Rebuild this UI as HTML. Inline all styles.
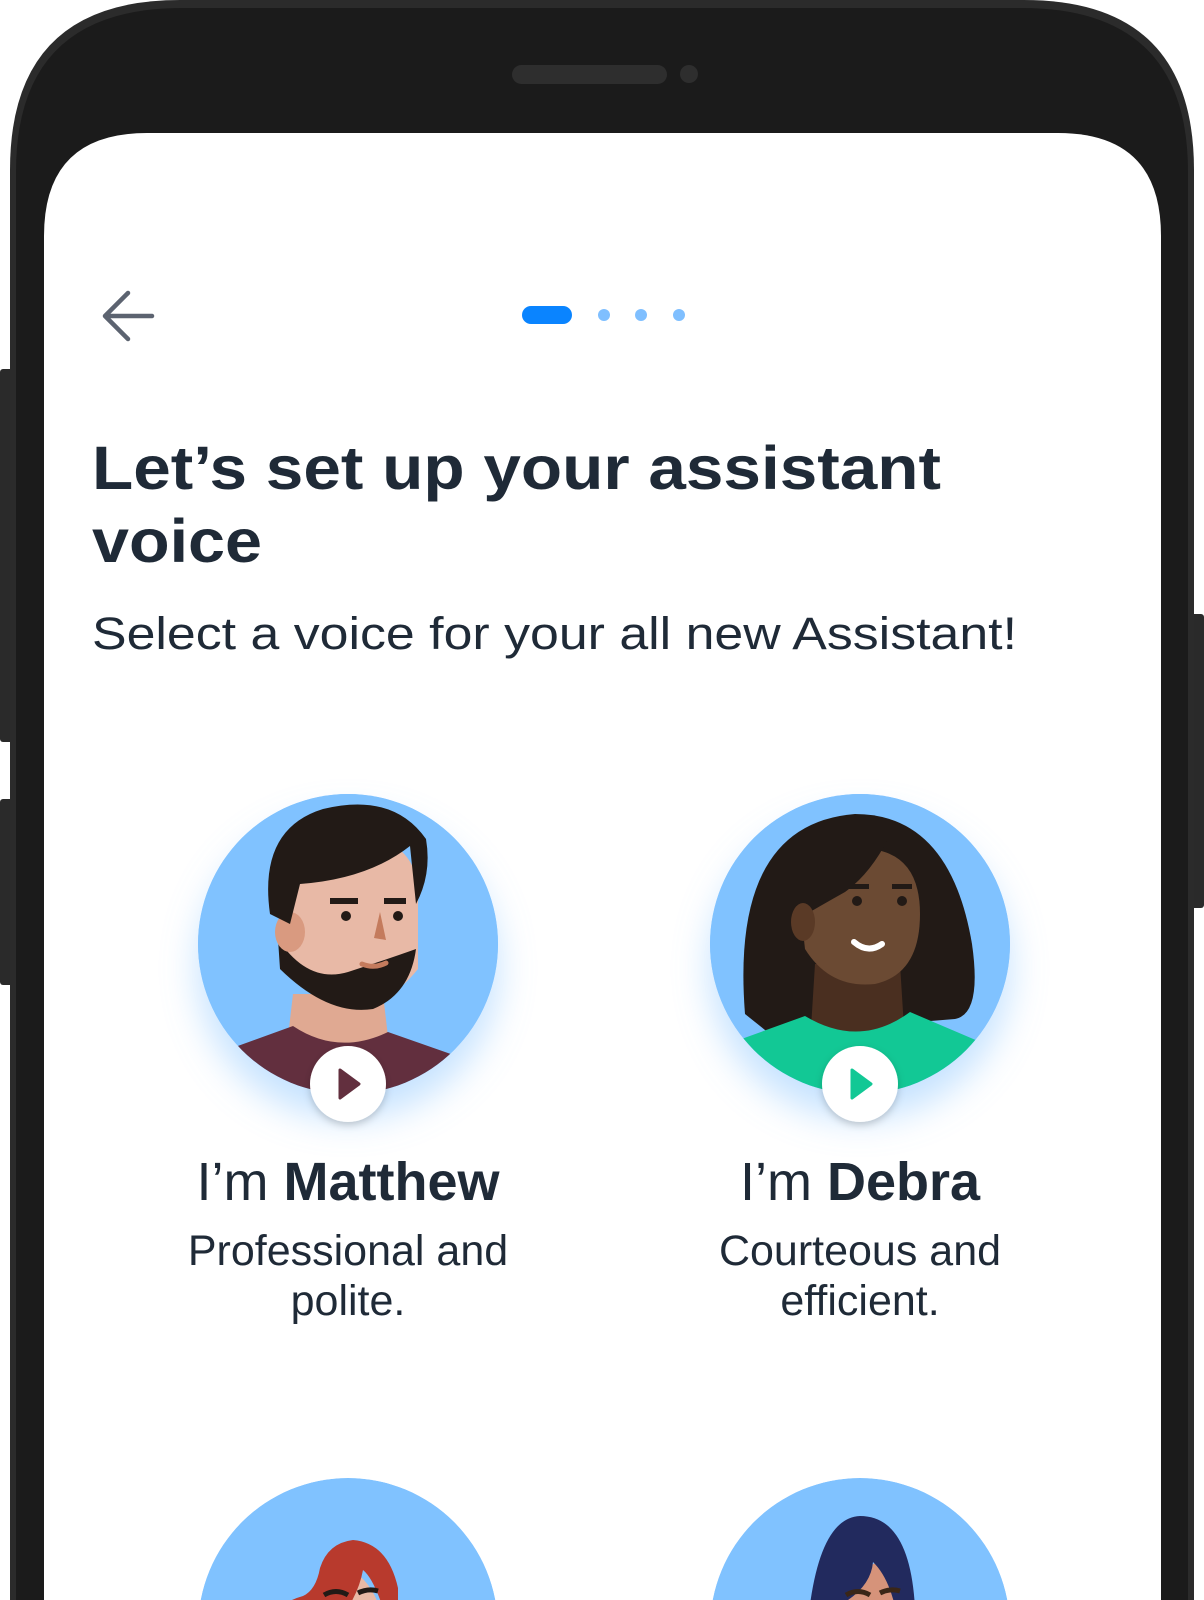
<!DOCTYPE html>
<html><head><meta charset="utf-8"><style>
html,body{margin:0;padding:0;background:#fff;width:1204px;height:1600px;overflow:hidden}
svg{display:block}
</style></head><body>
<svg width="1204" height="1600" viewBox="0 0 1204 1600" xmlns="http://www.w3.org/2000/svg">
<defs>
<clipPath id="c"><circle cx="0" cy="0" r="150"/></clipPath>
<filter id="sh" x="-50%" y="-50%" width="200%" height="200%">
<feDropShadow dx="0" dy="24" stdDeviation="18" flood-color="#7fbfff" flood-opacity="0.45"/></filter>
<filter id="sh2" x="-50%" y="-50%" width="200%" height="200%">
<feDropShadow dx="0" dy="3" stdDeviation="4" flood-color="#000" flood-opacity="0.2"/></filter>
</defs>
<rect x="0" y="369" width="14" height="373" rx="3" fill="#2a2a2a"/>
<rect x="0" y="799" width="14" height="186" rx="3" fill="#2a2a2a"/>
<rect x="1190" y="614" width="14" height="294" rx="3" fill="#2a2a2a"/>
<path d="M10 1600 V170 Q10 0 180 0 H1024 Q1194 0 1194 170 V1600 Z" fill="#2b2b2b"/>
<path d="M16 1600 V172 Q16 8 182 8 H1022 Q1188 8 1188 172 V1600 Z" fill="#1b1b1b"/>
<rect x="512" y="65" width="155" height="19" rx="9.5" fill="#2e2e2e"/>
<circle cx="689" cy="74" r="9" fill="#2e2e2e"/>
<path d="M44 1600 V236 Q44 133 147 133 H1058 Q1161 133 1161 236 V1600 Z" fill="#fff"/>
<path d="M152 316 H106 M128 293 L105 316 L128 339" stroke="#5c6370" stroke-width="4.5" fill="none" stroke-linecap="round" stroke-linejoin="round"/>
<rect x="522" y="306" width="50" height="18" rx="9" fill="#0a84ff"/>
<circle cx="604" cy="315" r="6" fill="#7fbfff"/>
<circle cx="641" cy="315" r="6" fill="#7fbfff"/>
<circle cx="679" cy="315" r="6" fill="#7fbfff"/>
<g font-family="Liberation Sans, sans-serif" fill="#1f2a37">
<text x="92" y="489" font-size="61" font-weight="bold" textLength="849" lengthAdjust="spacingAndGlyphs">Let’s set up your assistant</text>
<text x="92" y="562" font-size="61" font-weight="bold" textLength="170" lengthAdjust="spacingAndGlyphs">voice</text>
<text x="92" y="649" font-size="45" textLength="925" lengthAdjust="spacingAndGlyphs">Select a voice for your all new Assistant!</text>
</g>

<!-- Matthew -->
<g transform="translate(348,944)">
<circle r="150" fill="#80c2ff" filter="url(#sh)"/>
<g clip-path="url(#c)">
<circle r="150" fill="#80c2ff"/>
<path d="M-55 50 L35 50 L42 110 L-62 110 Z" fill="#e0a992"/>
<path d="M-160 150 L-160 120 L-55 82 Q-10 112 40 88 L160 130 L160 160 Z" fill="#622f3e"/>
<path d="M-68 -60 Q-66 -112 0 -110 Q66 -108 70 -55 L70 25 Q40 62 10 60 Q-45 55 -68 10 Z" fill="#e8b9a6"/>
<path d="M-70 -5 Q-40 40 0 28 Q40 15 68 5 Q62 50 25 65 Q-20 72 -68 25 Z" fill="#221a16"/>
<ellipse cx="-58" cy="-12" rx="15" ry="20" fill="#d99a80"/>
<path d="M-78 -30 Q-90 -115 -25 -135 Q45 -152 78 -105 Q84 -70 68 -40 L62 -98 Q20 -65 -48 -60 L-58 -20 Z" fill="#221a16"/>
<rect x="-18" y="-46" width="28" height="6" fill="#221a16"/>
<rect x="36" y="-46" width="22" height="6" fill="#221a16"/>
<circle cx="-2" cy="-28" r="5" fill="#221a16"/>
<circle cx="50" cy="-28" r="5" fill="#221a16"/>
<path d="M32 -32 L38 -4 L26 -6 Z" fill="#c47b5d"/>
<path d="M14 20 Q26 25 38 19" stroke="#c47b5d" stroke-width="5" fill="none" stroke-linecap="round"/>
</g>
<circle cy="140" r="38" fill="#fff" filter="url(#sh2)"/>
<path d="M-8 126 L11 140 L-8 154 Z" fill="#622f3e" stroke="#622f3e" stroke-width="3" stroke-linejoin="round"/>
</g>

<!-- Debra -->
<g transform="translate(860,944)">
<circle r="150" fill="#80c2ff" filter="url(#sh)"/>
<g clip-path="url(#c)">
<circle r="150" fill="#80c2ff"/>
<path d="M-115 70 Q-130 -120 -5 -130 Q90 -130 112 0 Q122 70 95 75 L-90 90 Z" fill="#221a16"/>
<path d="M-45 20 L40 20 L45 100 L-50 100 Z" fill="#4a2f20"/>
<path d="M-160 160 L-160 110 L-55 72 Q0 105 50 68 L160 115 L160 170 Z" fill="#12c895"/>
<path d="M-60 -40 Q-55 -100 10 -95 Q60 -90 60 -30 Q60 30 15 40 Q-30 45 -55 5 Z" fill="#6b4a33"/>
<path d="M-70 -105 L28 -105 Q10 -70 -15 -52 Q-40 -38 -62 -25 Z" fill="#221a16"/>
<ellipse cx="-57" cy="-22" rx="12" ry="19" fill="#5a3a26"/>
<rect x="-17" y="-60" width="26" height="5" fill="#221a16"/>
<rect x="32" y="-60" width="20" height="5" fill="#221a16"/>
<circle cx="-3" cy="-43" r="5" fill="#221a16"/>
<circle cx="42" cy="-43" r="5" fill="#221a16"/>
<path d="M-6 -2 Q8 10 22 0" stroke="#fff" stroke-width="6" fill="none" stroke-linecap="round"/>
</g>
<circle cy="140" r="38" fill="#fff" filter="url(#sh2)"/>
<path d="M-8 126 L11 140 L-8 154 Z" fill="#12c895" stroke="#12c895" stroke-width="3" stroke-linejoin="round"/>
</g>

<g font-family="Liberation Sans, sans-serif" fill="#1f2a37" text-anchor="middle">
<text x="348" y="1200" font-size="54"><tspan>I’m </tspan><tspan font-weight="bold">Matthew</tspan></text>
<text x="348" y="1265" font-size="43">Professional and</text>
<text x="348" y="1315" font-size="43">polite.</text>
<text x="860" y="1200" font-size="54"><tspan>I’m </tspan><tspan font-weight="bold">Debra</tspan></text>
<text x="860" y="1265" font-size="43">Courteous and</text>
<text x="860" y="1315" font-size="43">efficient.</text>
</g>

<g transform="translate(348,1628)">
<g clip-path="url(#c)">
<circle r="150" fill="#80c2ff"/>
<path d="M-70 40 Q-40 -30 0 -60 Q40 -40 40 40 Z" fill="#e8b9a6"/>
<path d="M-70 40 L-72 -10 Q-70 -25 -45 -32 Q-32 -38 -28 -60 Q-20 -85 5 -88 Q40 -85 50 -40 L50 40 L37 40 L35 -20 Q25 -50 15 -58 Q8 -20 -30 15 Z" fill="#b83a2d"/>
<path d="M-24 -33 Q-12 -40 0 -33" stroke="#221a16" stroke-width="5" fill="none"/>
<path d="M10 -35 Q20 -40 30 -37" stroke="#221a16" stroke-width="5" fill="none"/>
</g>
</g>
<g transform="translate(860,1628)">
<g clip-path="url(#c)">
<circle r="150" fill="#80c2ff"/>
<path d="M-45 40 Q-30 -40 15 -65 Q50 -40 48 40 Z" fill="#d6937a"/>
<path d="M-55 40 Q-50 -110 0 -112 Q50 -112 55 -20 L55 40 L42 40 Q40 -40 13 -66 Q10 -30 -50 -10 Z" fill="#222a5e"/>
<path d="M-14 -33 Q-2 -40 10 -33" stroke="#3a2617" stroke-width="5" fill="none"/>
<path d="M20 -35 Q30 -40 40 -37" stroke="#3a2617" stroke-width="5" fill="none"/>
</g>
</g>
</svg>
</body></html>
